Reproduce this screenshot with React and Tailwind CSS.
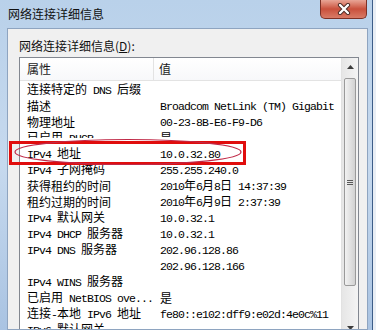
import React from 'react';

const rows = [
  ['连接特定的 DNS 后缀', ''],
  ['描述', 'Broadcom NetLink (TM) Gigabit'],
  ['物理地址', '00-23-8B-E6-F9-D6'],
  ['已启用 DHCP', '是'],
  ['IPv4 地址', '10.0.32.80'],
  ['IPv4 子网掩码', '255.255.240.0'],
  ['获得租约的时间', '2010年6月8日 14:37:39'],
  ['租约过期的时间', '2010年6月9日 2:37:39'],
  ['IPv4 默认网关', '10.0.32.1'],
  ['IPv4 DHCP 服务器', '10.0.32.1'],
  ['IPv4 DNS 服务器', '202.96.128.86'],
  ['', '202.96.128.166'],
  ['IPv4 WINS 服务器', ''],
  ['已启用 NetBIOS ove...', '是'],
  ['连接-本地 IPv6 地址', 'fe80::e102:dff9:e02d:4e0c%11'],
  ['IPv6 默认网关', ''],
];

// CJK runs get the CJK face, everything else the fixed-width one
const Mixed = ({ text }) =>
  text
    .split(/([\u3000-\u9fff\uff00-\uffef]+)/)
    .filter(Boolean)
    .map((part, i) =>
      /[\u3000-\u9fff\uff00-\uffef]/.test(part) ? (
        <span key={i} className="font-['Noto_Sans_CJK_SC',sans-serif] text-[12px]">
          {part}
        </span>
      ) : (
        <span key={i} className="font-['Liberation_Mono',monospace] text-[11.5px] tracking-[-0.9px]">
          {part}
        </span>
      )
    );

const Arrow = ({ up }) => (
  <div className="h-[18px] flex items-center justify-center">
    <svg width="7" height="4" viewBox="0 0 7 4">
      <path d={up ? 'M0 4 L3.5 0 L7 4 Z' : 'M0 0 L3.5 4 L7 0 Z'} fill="#3c3c3c" />
    </svg>
  </div>
);

const ScrollBar = () => (
  <div className="w-[17px] flex flex-col bg-gradient-to-r from-[#e6e6e6] to-[#f4f4f4] border-l border-[#e2e2e2]">
    <Arrow up />
    <div className="mt-[2px] ml-[2px] w-[12px] h-[208px] rounded-[2px] border border-[#9a9a9a] bg-gradient-to-r from-[#f2f2f2] via-[#e2e2e2] to-[#d2d2d2] flex items-center justify-center">
      <div className="flex flex-col gap-[1px]">
        <div className="w-[6px] h-px bg-[#5a5a5a]" />
        <div className="w-[6px] h-px bg-[#5a5a5a]" />
        <div className="w-[6px] h-px bg-[#5a5a5a]" />
      </div>
    </div>
    <div className="flex-1" />
    <Arrow />
  </div>
);

const CloseButton = () => (
  <div className="w-[47px] h-[19px] rounded-b-[5px] border border-t-0 border-[#7d3126] bg-gradient-to-b from-[#e8a596] via-[#c9503c] to-[#d87a66] flex items-center justify-center">
    <svg width="14" height="12" viewBox="0 0 14 12">
      <path d="M3 2 L11 10 M11 2 L3 10" stroke="#4a2a24" strokeWidth="4.2" strokeLinecap="round" />
      <path d="M3 2 L11 10 M11 2 L3 10" stroke="#ffffff" strokeWidth="2.4" strokeLinecap="round" />
    </svg>
  </div>
);

export default function App() {
  return (
    <div className="relative w-[376px] h-[330px] overflow-hidden flex bg-[#dfe8f3]">
      <div className="w-[373px] h-full flex flex-col bg-gradient-to-b from-[#b9d1ea] via-[#c6d9ee] to-[#a9c3e2] border-r border-[#3d5d88]">
        <div className="h-[28px] flex items-start justify-between shrink-0">
          <div className="pl-[8px] pt-[5px] font-['Noto_Sans_CJK_SC',sans-serif] text-[12px] leading-[18px] text-[#111]">
            网络连接详细信息
          </div>
          <div className="mr-[5px]">
            <CloseButton />
          </div>
        </div>

        <div className="flex-1 min-h-0 ml-[7px] mr-[4px] border border-[#8ea4c0] bg-[#f0f0f0] pl-[11px] overflow-hidden">
          <div className="mt-[9px] h-[16px] leading-[16px] text-[12px] font-['Noto_Sans_CJK_SC',sans-serif] text-[#111]">
            网络连接详细信息(<span className="underline">D</span>):
          </div>
          <div className="mt-[3px] w-[340px] border border-[#828790] bg-white flex">
            <div className="flex-1 min-w-0">
              <div className="h-[23px] flex items-stretch border-b border-[#e3e3e3] bg-gradient-to-b from-white to-[#f7f8fa]">
                <div className="w-[134px] pl-[7px] flex items-center border-r border-[#e3e3e3] font-['Noto_Sans_CJK_SC',sans-serif] text-[12px] text-[#1a1a1a]">
                  属性
                </div>
                <div className="pl-[5px] flex items-center font-['Noto_Sans_CJK_SC',sans-serif] text-[12px] text-[#1a1a1a]">
                  值
                </div>
              </div>
              {rows.map(([name, value], i) => (
                <div key={i} className="h-[16px] flex items-center leading-[16px] text-black whitespace-pre">
                  <div className="w-[140px] pl-[7px] overflow-hidden">
                    <Mixed text={name} />
                  </div>
                  <div className="flex-1 overflow-hidden">
                    <Mixed text={value} />
                  </div>
                </div>
              ))}
            </div>
            <ScrollBar />
          </div>
        </div>
      </div>
      <div className="flex-1 bg-[#e9eef5]" />

      {/* annotation overlays */}
      <div className="absolute left-[20px] top-[138px] w-[226px] h-[3px] bg-white" />
      <div className="absolute left-[9px] top-[141px] w-[237px] h-[24px] border-[3px] border-[#e00d0d]" />
      <svg className="absolute left-0 top-0 pointer-events-none" width="376" height="330" viewBox="0 0 376 330">
        <ellipse cx="128" cy="152" rx="113" ry="12.5" fill="none" stroke="#c02a48" strokeWidth="1.2" />
      </svg>
    </div>
  );
}
